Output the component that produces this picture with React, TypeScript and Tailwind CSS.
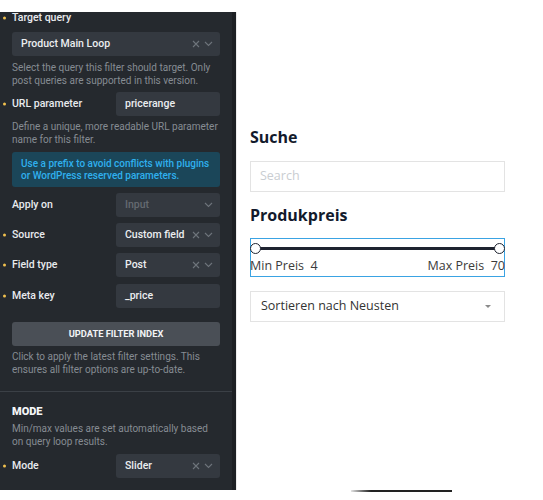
import React from 'react';

const XIcon = () => (
  <svg width="8" height="8" viewBox="0 0 8 8" fill="none" stroke="currentColor" strokeWidth="1.1">
    <path d="M1 1l6 6M7 1L1 7" />
  </svg>
);

const Chevron = () => (
  <svg width="9" height="6" viewBox="0 0 9 6" fill="none" stroke="currentColor" strokeWidth="1.1">
    <path d="M1 1l3.5 3.5L8 1" />
  </svg>
);

const Dot = () => <span className="absolute left-[3px] top-1/2 -translate-y-1/2 w-[3px] h-[3px] rounded-full bg-[#f2c14e]" />;

const Label = ({ text, dot = true }: { text: string; dot?: boolean }) => (
  <div className="relative flex-1 pl-[12px] text-[10.5px] font-medium text-[#e9ebee]">
    {dot && <Dot />}
    {text}
  </div>
);

const SelectBox = ({ value, clear = true, disabled = false, className = '' }: { value: string; clear?: boolean; disabled?: boolean; className?: string }) => (
  <div className={`h-[24px] rounded-[3px] bg-[#343940] flex items-center pl-[9px] pr-[7px] ${className}`}>
    <span className={`flex-1 text-[10.5px] font-medium ${disabled ? 'text-[#646a71]' : 'text-[#eceef0]'}`}>{value}</span>
    <span className="flex items-center gap-[4px] text-[#6e747b]">
      {clear && <XIcon />}
      <Chevron />
    </span>
  </div>
);

const InputBox = ({ value }: { value: string }) => (
  <div className="h-[24px] w-[104px] rounded-[3px] bg-[#343940] flex items-center pl-[9px] text-[10.5px] font-medium text-[#eceef0]">
    {value}
  </div>
);

const Row = ({ label, dot = true, children, className = '' }: { label: string; dot?: boolean; children: React.ReactNode; className?: string }) => (
  <div className={`flex items-center pr-[12px] ${className}`}>
    <Label text={label} dot={dot} />
    {children}
  </div>
);

const Desc = ({ children, className = '' }: { children: React.ReactNode; className?: string }) => (
  <p className={`pl-[12px] pr-[12px] text-[10px] leading-[13px] text-[#868c93] ${className}`}>{children}</p>
);

export default function App() {
  return (
    <div className="w-[543px] h-[500px] bg-white flex flex-col" style={{ fontFamily: 'Roboto, "Noto Sans", sans-serif' }}>
      <div className="h-[12px]" />
      <div className="flex h-[478px]">
        {/* builder panel */}
        <div className="w-[236px] bg-[#25292e] flex overflow-hidden">
          <div className="flex-1">
            <div className="relative pl-[12px] text-[10.5px] leading-[12px] font-medium text-[#e9ebee]">
              <Dot />
              Target query
            </div>
            <div className="pl-[12px] pr-[12px] mt-[8px]">
              <SelectBox value="Product Main Loop" />
            </div>
            <Desc className="mt-[5px]">
              Select the query this filter should target. Only post queries are supported in this version.
            </Desc>
            <Row label="URL parameter" className="mt-[5px]">
              <InputBox value="pricerange" />
            </Row>
            <Desc className="mt-[4px]">Define a unique, more readable URL parameter name for this filter.</Desc>
            <div className="ml-[12px] mr-[12px] mt-[6px] rounded-[3px] bg-[#1b4659] pl-[9px] pr-[4px] pt-[6px] pb-[5px] text-[10px] leading-[12px] font-medium text-[#2fb0ee]">
              Use a prefix to avoid conflicts with plugins or WordPress reserved parameters.
            </div>
            <Row label="Apply on" dot={false} className="mt-[6px]">
              <SelectBox value="Input" clear={false} disabled className="w-[104px]" />
            </Row>
            <Row label="Source" className="mt-[6px]">
              <SelectBox value="Custom field" className="w-[104px]" />
            </Row>
            <Row label="Field type" className="mt-[6px]">
              <SelectBox value="Post" className="w-[104px]" />
            </Row>
            <Row label="Meta key" className="mt-[7px]">
              <InputBox value="_price" />
            </Row>
            <div className="mx-[12px] mt-[14px] h-[24px] rounded-[3px] bg-[#4a4f56] flex items-center justify-center text-[9.3px] font-bold text-[#f2f3f5]">
              UPDATE FILTER INDEX
            </div>
            <Desc className="mt-[4px]">Click to apply the latest filter settings. This ensures all filter options are up-to-date.</Desc>
            <div className="mt-[15px] h-px bg-[#3b4046]" />
            <div className="pl-[12px] mt-[13px] text-[11px] leading-[14px] font-black text-[#f4f5f7]">MODE</div>
            <Desc className="mt-[3px] leading-[12px]">Min/max values are set automatically based on query loop results.</Desc>
            <Row label="Mode" className="mt-[6px]">
              <SelectBox value="Slider" className="w-[104px]" />
            </Row>
          </div>
          <div className="w-[4px] bg-[#1d2024]" />
        </div>

        {/* preview */}
        <div className="flex-1 border-l border-[#ececec] pl-[13px] pr-[38px] pt-[113px]" style={{ fontFamily: '"Open Sans", "Noto Sans", sans-serif' }}>
          <h2 className="text-[16px] leading-[24px] font-bold text-[#121a2c]">Suche</h2>
          <div className="mt-[12px] h-[31px] border border-[#e3e3e3] flex items-center pl-[9px] text-[12.5px] text-[#c9cdd1]">
            Search
          </div>
          <h2 className="mt-[11px] text-[16px] leading-[24px] font-bold text-[#121a2c]">Produkpreis</h2>
          <div className="mt-[11px] h-[39px] border border-[#3aa3e3] pt-[4px]">
            <div className="relative h-[10px]">
              <div className="absolute left-[5px] right-[5px] top-[4px] h-[3px] bg-[#1e2330]" />
              <span className="absolute left-[-1px] top-0 w-[11px] h-[11px] rounded-full border-[1.5px] border-[#1e2330] bg-white" />
              <span className="absolute right-[-1px] top-0 w-[11px] h-[11px] rounded-full border-[1.5px] border-[#1e2330] bg-white" />
            </div>
            <div className="mt-[5px] flex justify-between text-[12.5px] leading-[16px] text-[#3b3b3b] ml-[-1px] mr-[-1px]">
              <span>Min Preis&nbsp;&nbsp;4</span>
              <span>Max Preis&nbsp;&nbsp;70</span>
            </div>
          </div>
          <div className="mt-[14px] h-[31px] border border-[#e3e3e3] flex items-center pl-[10px] pr-[13px] text-[12.5px] text-[#333]">
            <span className="flex-1">Sortieren nach Neusten</span>
            <span className="w-0 h-0 border-l-[3px] border-r-[3px] border-t-[3px] border-l-transparent border-r-transparent border-t-[#8a8a8a]" />
          </div>
        </div>
      </div>
      <div className="h-[10px] flex">
        <div className="ml-[351px] w-[101px] h-[2px] bg-gradient-to-r from-[#e5e5e5] via-[#222] via-20% to-[#222]" />
      </div>
    </div>
  );
}
